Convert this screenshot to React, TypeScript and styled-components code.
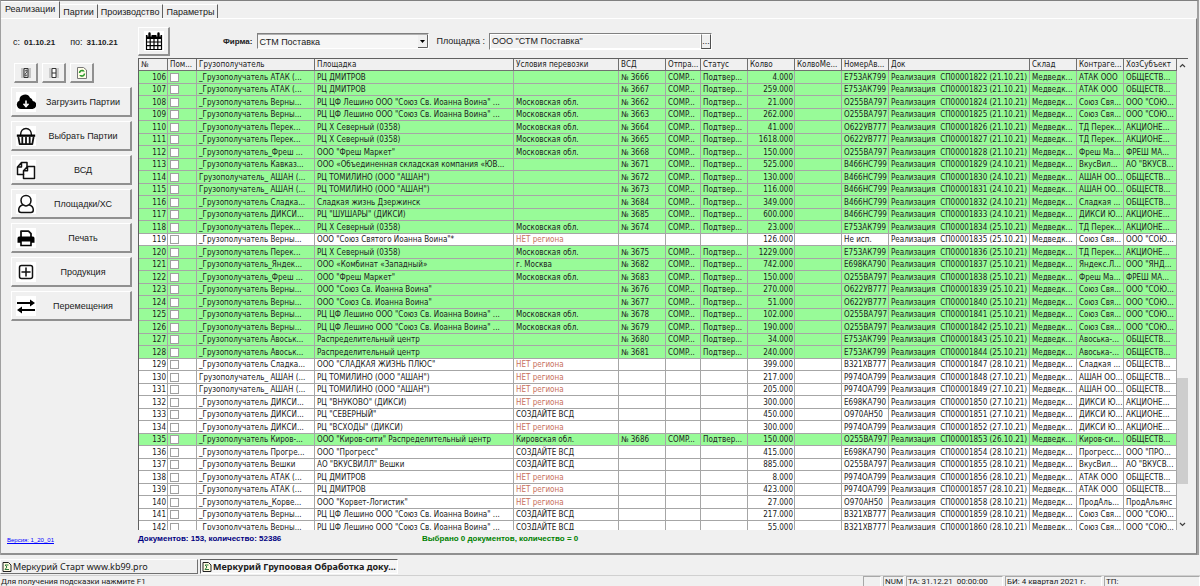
import React from 'react';
import styled, { createGlobalStyle } from 'styled-components';

const GlobalStyle = createGlobalStyle`
  * { box-sizing: border-box; }
  html, body { margin: 0; padding: 0; background: #f0f0f0; }
  body, button, input, select { font-family: "Liberation Sans", Arial, sans-serif; font-size: 9px; color: #202020; }
`;

const Window = styled.div`
  display: flex;
  flex-direction: column;
  height: 100vh;
  overflow: hidden;
  background: #f0f0f0;
`;

const Workspace = styled.div`
  flex: 1;
  min-height: 0;
  display: flex;
  flex-direction: column;
  margin-right: 1px;
  border-top: 1px solid #808080;
  border-left: 1px solid #a0a0a0;
  border-right: 2px solid #a0a0a0;
`;

const TabBar = styled.nav`
  display: flex;
  align-items: flex-end;
  height: 17px;
`;

const Tab = styled.button<{ $active?: boolean }>`
  height: ${p => (p.$active ? 17 : 14)}px;
  padding: ${p => (p.$active ? '0 4px 2px' : '0 3px')};
  border: 0;
  border-top: 1px solid #fff;
  border-right: 1px solid #606060;
  background: #f0f0f0;
  line-height: 12px;
  white-space: nowrap;
`;

const Page = styled.main`
  flex: 1;
  min-height: 0;
  display: flex;
  border-top: 1px solid #fff;
  border-right: 1px solid #808080;
  border-bottom: 2px solid #909090;
`;

const Sidebar = styled.aside`
  flex: 0 0 137px;
  display: flex;
  flex-direction: column;
  padding: 15px 6px 9px 10px;
`;

const Period = styled.div`
  display: flex;
  gap: 15px;
  height: 16px;
  padding-left: 2px;
  align-items: center;

  b { font-size: 8px; }
`;

const PeriodItem = styled.span`
  display: flex;
  align-items: center;
  gap: 4px;
  white-space: nowrap;
`;

const SmallButtons = styled.div`
  display: flex;
  gap: 4px;
  margin: 13px 0 4px;
  padding-left: 3px;
`;

const Raised = styled.button`
  border: 1px solid;
  border-color: #fff #909090 #909090 #fff;
  background: #f0f0f0;
  padding: 0;
`;

const SmallButton = styled(Raised)`
  width: 24px;
  height: 20px;
  display: grid;
  place-items: center;
  border-right-width: 2px;
  border-bottom-width: 2px;
`;

const Actions = styled.div`
  display: flex;
  flex-direction: column;
  gap: 4px;
`;

const ActionButton = styled(Raised)`
  height: 30px;
  display: flex;
  align-items: center;
  padding: 0 0 0 4px;
  border-right-width: 2px;
  border-bottom-width: 2px;

  svg { flex: none; background: #fff; }
  span { flex: 1; text-align: center; }
`;

const Version = styled.a`
  margin-top: auto;
  margin-left: -4px;
  font-size: 6px;
  line-height: 8px;
  color: #0000ff;
`;

const Content = styled.section`
  flex: 1;
  min-width: 0;
  display: flex;
  flex-direction: column;
  padding-right: 8px;
`;

const FilterBar = styled.div`
  display: flex;
  align-items: center;
  height: 39px;
  padding-top: 5px;
`;

const CalendarButton = styled(Raised)`
  width: 32px;
  height: 29px;
  margin: 0 53px 0 0;
  display: grid;
  place-items: center;
  border-right-width: 2px;
  border-bottom-width: 2px;
  svg { background: #fff; }
`;

const FieldLabel = styled.label<{ $bold?: boolean }>`
  font-size: ${p => (p.$bold ? 8 : 9)}px;
  font-weight: ${p => (p.$bold ? 700 : 400)};
  white-space: nowrap;
`;

const SelectBox = styled.span`
  display: flex;
  position: relative;
  width: 172px;
  height: 16px;
  margin: 0 7px 0 5px;
  border: 1px solid;
  border-color: #808080 #fff #fff #808080;

  svg {
    position: absolute;
    right: 0;
    top: 1px;
    pointer-events: none;
  }
`;

const Select = styled.select`
  appearance: none;
  flex: 1;
  padding: 0 12px 0 1px;
  border: 0;
  border-top: 1px solid #b0b0b0;
  background: #f6f6f6;
`;

const PickerBox = styled.span`
  display: flex;
  width: 223px;
  height: 17px;
  margin-left: 4px;
  border: 1px solid;
  border-color: #808080 #fff #fff #808080;
`;

const PickerInput = styled.input`
  flex: 1;
  min-width: 0;
  padding: 0 1px;
  border: 1px solid #fff;
  background: #f0f0f0;
`;

const PickerButton = styled(Raised)`
  width: 10px;
  line-height: 10px;
  border-color: #fff #505050 #505050 #808080;
`;

const GridFrame = styled.div`
  flex: 1;
  min-height: 0;
  display: flex;
  border-top: 1px solid #606060;
  border-left: 1px solid #606060;
  background: #f0f0f0;
`;

const GridViewport = styled.div`
  flex: 1;
  min-width: 0;
  overflow: hidden;
`;

const Table = styled.table`
  width: 100%;
  table-layout: fixed;
  border-collapse: separate;
  border-spacing: 0;
  font-family: "DejaVu Sans Condensed", "DejaVu Sans", sans-serif;
  font-size: 8px;
`;

const HeadCell = styled.th`
  height: 12px;
  padding: 0 0 0 2px;
  border-right: 1px solid #707070;
  border-bottom: 1px solid #707070;
  background: #f0f0f0;
  font-weight: 400;
  line-height: 11px;
  text-align: left;
  white-space: nowrap;
  overflow: hidden;
`;

const Row = styled.tr<{ $confirmed: boolean }>`
  height: 12px;
  background: ${p => (p.$confirmed ? '#98fb98' : '#fff')};
  &:nth-child(odd) { height: 13px; }
`;

const Cell = styled.td<{ $right?: boolean; $warn?: boolean }>`
  padding: 0 ${p => (p.$right ? 1 : 0)}px 0 2px;
  border-right: 1px solid #a6a6a6;
  border-bottom: 1px solid #a6a6a6;
  color: ${p => (p.$warn ? '#c8705c' : '#202020')};
  line-height: 11px;
  text-align: ${p => (p.$right ? 'right' : 'left')};
  white-space: pre;
  overflow: hidden;
`;

const Check = styled.input`
  appearance: none;
  display: block;
  width: 9px;
  height: 9px;
  margin: 0;
  border: 1px solid #a0a0a0;
  background: #fff;
`;

const ScrollBar = styled.div`
  flex: 0 0 11px;
  display: flex;
  flex-direction: column;
  align-items: center;
  background: #f0f0f0;
`;

const ScrollArrow = styled.button`
  width: 11px;
  height: 12px;
  padding: 0;
  border: 0;
  background: #f0f0f0;
  display: grid;
  place-items: center;
`;

const ScrollTrack = styled.div`
  flex: 1;
  align-self: stretch;
  display: flex;
  flex-direction: column;
`;

const ScrollSpace = styled.div<{ $share: number }>`
  flex: ${p => p.$share} 0 0;
`;

const ScrollThumb = styled.div`
  flex: 106 0 0;
  background: #cdcdcd;
`;

const Summary = styled.footer`
  display: flex;
  height: 23px;
  padding-top: 3px;
  font-size: 8px;
  font-weight: 700;
  line-height: 12px;
`;

const Total = styled.span`
  flex: 0 0 284px;
  color: #000080;
`;

const Selected = styled.span`
  color: #008000;
`;

const WindowTabs = styled.nav`
  display: flex;
  gap: 2px;
  height: 20px;
  padding: 4px 0 1px;
`;

const WindowTab = styled(Raised)<{ $active?: boolean }>`
  width: 198px;
  display: flex;
  align-items: center;
  gap: 1px;
  padding-left: 1px;
  overflow: hidden;
  border-color: ${p => (p.$active ? '#606060 #fff #fff #606060' : '#fff #707070 #707070 #fff')};
  background: ${p => (p.$active ? '#f6f6f6' : '#f0f0f0')};
  font-family: "Noto Sans", "Open Sans", sans-serif;
  font-weight: ${p => (p.$active ? 700 : 400)};
  line-height: 12px;
  white-space: nowrap;
`;

const StatusBar = styled.footer`
  display: flex;
  gap: 2px;
  height: 11px;
  border-top: 1px solid #d0d0d0;
  font-family: Roboto, "Liberation Sans", sans-serif;
  font-size: 8px;
  line-height: 11px;
  white-space: pre;
`;

const Hint = styled.span`
  flex: 1;
  padding-left: 1px;
`;

const StatusPane = styled.span<{ $width: number }>`
  flex: 0 0 ${p => p.$width}px;
  padding-left: 1px;
  border-top: 1px solid #a8a8a8;
  border-left: 1px solid #a8a8a8;
  border-right: 1px solid #fff;
  line-height: 10px;
`;

const columns: [string, number | null][] = [
  ['№', 29], ['Пом...', 29], ['Грузополучатель', 118], ['Площадка', null],
  ['Условия перевозки', 105], ['ВСД', 47], ['Отпра...', 35], ['Статус', 47],
  ['Колво', 47], ['КолвоМе...', 47], ['НомерАв...', 47], ['Док', 141],
  ['Склад', 47], ['Контраге...', 47], ['ХозСубъект', 53],
];

type Doc = [string, string, string, string, string, string, string, string, string];

const G = '_Грузополучатель';
const MO = 'Московская обл.';
const NO = 'НЕТ региона';
const MAKE = 'СОЗДАЙТЕ ВСД';
const LESH = 'РЦ ЦФ Лешино ООО "Союз Св. Иоанна Воина" ...';
const SOYUZ = 'ООО "Союз Св. Иоанна Воина"';
const NORTH = 'РЦ Х Северный (0358)';
const TOM = 'РЦ ТОМИЛИНО (ООО "АШАН")';
const ASH = 'Грузополучатель_ АШАН (...';
const OB = 'ОБЩЕСТВ...';
const AK = 'АКЦИОНЕ...';
const SO = 'ООО "СОЮ...';

// consignee, site, conditions, certificate, quantity, vehicle, document, contractor, legal entity
const docs: Doc[] = [
  [G + ' АТАК (...', 'РЦ ДМИТРОВ', '', '3666', '4.000', 'Е753АК799', '1822 (21.10.21)', 'АТАК ООО', OB],
  [G + ' АТАК (...', 'РЦ ДМИТРОВ', '', '3667', '259.000', 'Е753АК799', '1823 (21.10.21)', 'АТАК ООО', OB],
  [G + ' Верны...', LESH, MO, '3662', '21.000', 'О255ВА797', '1824 (21.10.21)', 'Союз Свя...', SO],
  [G + ' Верны...', LESH, MO, '3663', '262.000', 'О255ВА797', '1825 (21.10.21)', 'Союз Свя...', SO],
  [G + ' Перек...', NORTH, MO, '3664', '41.000', 'О622УВ777', '1826 (21.10.21)', 'ТД Перек...', AK],
  [G + ' Перек...', NORTH, MO, '3665', '1618.000', 'О622УВ777', '1827 (21.10.21)', 'ТД Перек...', AK],
  [G + '_Фреш ...', 'ООО "Фреш Маркет"', MO, '3668', '150.000', 'О255ВА797', '1828 (21.10.21)', 'Фреш Ма...', 'ФРЕШ МА...'],
  [G + ' Кавказ...', 'ООО «Объединенная складская компания «ЮВ...', '', '3671', '525.000', 'В466НС799', '1829 (24.10.21)', 'ВкусВил...', 'АО "ВКУСВ...'],
  [ASH, TOM, '', '3672', '130.000', 'В466НС799', '1830 (24.10.21)', 'АШАН ОО...', OB],
  [ASH, TOM, '', '3673', '116.000', 'В466НС799', '1831 (24.10.21)', 'АШАН ОО...', OB],
  [G + ' Сладка...', 'Сладкая жизнь Дзержинск', '', '3684', '349.000', 'В466НС799', '1832 (24.10.21)', 'Сладкая ...', OB],
  [G + ' ДИКСИ...', 'РЦ "ШУШАРЫ" (ДИКСИ)', '', '3685', '600.000', 'В466НС799', '1833 (24.10.21)', 'ДИКСИ Ю...', AK],
  [G + ' Перек...', NORTH, MO, '3674', '23.000', 'Е753АК799', '1834 (25.10.21)', 'ТД Перек...', AK],
  [G + ' Верны...', 'ООО "Союз Святого Иоанна Воина"*', NO, '', '126.000', 'Не исп.', '1835 (25.10.21)', 'Союз Свя...', SO],
  [G + ' Перек...', NORTH, MO, '3675', '1229.000', 'Е753АК799', '1836 (25.10.21)', 'ТД Перек...', AK],
  [G + '_Яндек...', 'ООО «Комбинат «Западный»', 'г. Москва', '3682', '742.000', 'Е698КА790', '1837 (25.10.21)', 'Яндекс.Л...', 'ООО "ЯНД...'],
  [G + '_Фреш ...', 'ООО "Фреш Маркет"', MO, '3683', '150.000', 'О255ВА797', '1838 (25.10.21)', 'Фреш Ма...', 'ФРЕШ МА...'],
  [G + ' Верны...', SOYUZ, '', '3676', '270.000', 'О622УВ777', '1839 (25.10.21)', 'Союз Свя...', SO],
  [G + ' Верны...', SOYUZ, '', '3677', '51.000', 'О622УВ777', '1840 (25.10.21)', 'Союз Свя...', SO],
  [G + ' Верны...', LESH, MO, '3678', '102.000', 'О255ВА797', '1841 (25.10.21)', 'Союз Свя...', SO],
  [G + ' Верны...', LESH, MO, '3679', '190.000', 'О255ВА797', '1842 (25.10.21)', 'Союз Свя...', SO],
  [G + ' Авоськ...', 'Распределительный центр', '', '3680', '34.000', 'Е753АК799', '1843 (25.10.21)', 'Авоська-...', OB],
  [G + ' Авоськ...', 'Распределительный центр', '', '3681', '240.000', 'Е753АК799', '1844 (25.10.21)', 'Авоська-...', OB],
  [G + ' Сладка...', 'ООО "СЛАДКАЯ ЖИЗНЬ ПЛЮС"', NO, '', '399.000', 'В321ХВ777', '1847 (28.10.21)', 'Сладкая ...', OB],
  [ASH, TOM, NO, '', '217.000', 'Р974ОА799', '1848 (27.10.21)', 'АШАН ОО...', OB],
  [ASH, TOM, NO, '', '205.000', 'Р974ОА799', '1849 (27.10.21)', 'АШАН ОО...', OB],
  [G + ' ДИКСИ...', 'РЦ "ВНУКОВО" (ДИКСИ)', NO, '', '300.000', 'Е698КА790', '1850 (27.10.21)', 'ДИКСИ Ю...', AK],
  [G + ' ДИКСИ...', 'РЦ "СЕВЕРНЫЙ"', MAKE, '', '450.000', 'О970АН50', '1851 (27.10.21)', 'ДИКСИ Ю...', AK],
  [G + ' ДИКСИ...', 'РЦ "ВСХОДЫ" (ДИКСИ)', NO, '', '300.000', 'Р974ОА799', '1852 (27.10.21)', 'ДИКСИ Ю...', AK],
  [G + ' Киров-...', 'ООО "Киров-сити" Распределительный центр', 'Кировская обл.', '3686', '150.000', 'О255ВА797', '1853 (26.10.21)', 'Киров-си...', OB],
  [G + ' Прогре...', 'ООО "Прогресс"', MAKE, '', '415.000', 'Е698КА790', '1854 (28.10.21)', 'Прогресс...', 'ООО "ПРО...'],
  [G + ' Вешки', 'АО "ВКУСВИЛЛ" Вешки', MAKE, '', '885.000', 'О255ВА797', '1855 (28.10.21)', 'ВкусВил...', 'АО "ВКУСВ...'],
  [G + ' АТАК (...', 'РЦ ДМИТРОВ', NO, '', '8.000', 'Р974ОА799', '1856 (28.10.21)', 'АТАК ООО', OB],
  [G + ' АТАК (...', 'РЦ ДМИТРОВ', NO, '', '423.000', 'Р974ОА799', '1857 (28.10.21)', 'АТАК ООО', OB],
  [G + '_Корве...', 'ООО "Корвет-Логистик"', NO, '', '27.000', 'О970АН50', '1858 (28.10.21)', 'ПродАль...', 'ПродАльянс'],
  [G + ' Верны...', LESH, MAKE, '', '217.000', 'В321ХВ777', '1859 (28.10.21)', 'Союз Свя...', SO],
  [G + ' Верны...', LESH, MAKE, '', '55.000', 'В321ХВ777', '1860 (28.10.21)', 'Союз Свя...', SO],
];

const stroke = { fill: 'none', stroke: '#111', strokeWidth: 1.5, strokeLinejoin: 'round' as const, strokeLinecap: 'round' as const };

const icons: Record<string, React.ReactNode> = {
  cloud: (
    <>
      <path d="M5 17a4.500 4.500 0 0 1-1.500-8.600A5.500 5.500 0 0 1 14 5.800a4 4 0 0 1 2.800 3.200A4 4 0 0 1 15.500 17z" fill="#000" />
      <path d="M10 8.500v4.500M7.500 11.700l2.500 2.800 2.500-2.800" stroke="#fff" strokeWidth="1.600" fill="none" />
    </>
  ),
  basket: (
    <>
      <path d="M4.500 9.500C4.500 5 7 2.500 10 2.500s5.500 2.500 5.500 7" {...stroke} />
      <path d="M.8 8.500h18.400v2.300H.8z" fill="#000" />
      <path d="M2.500 11.500l1.200 6.700h12.600l1.200-6.700M6.300 11.500v6M10 11.500v6M13.700 11.500v6" {...stroke} strokeWidth={1.800} />
    </>
  ),
  copies: (
    <>
      <path d="M7.500 14.500H1.500V7l4-4.500h5.500v4M5.500 2.500V7h-4" {...stroke} />
      <path d="M7.500 18.500v-7.700l4-4.300h7v12zM11.500 6.500v4.300h-4" {...stroke} />
    </>
  ),
  person: (
    <path d="M10 1.500c-3 0-5 2.200-5 5 0 1.700.7 3.200 1.900 4.200C4 11.600 2.700 13.500 2.700 16c0 1.600.9 2.500 2.400 2.500h9.800c1.500 0 2.400-.9 2.400-2.500 0-2.500-1.300-4.400-4.200-5.300A5.300 5.300 0 0 0 15 6.500c0-2.800-2-5-5-5zM6.900 10.700c1.800 1.400 4.400 1.400 6.200 0" {...stroke} />
  ),
  printer: (
    <>
      <path d="M5 9V3.200h7.500L15 5.700V9" {...stroke} strokeWidth={1.800} />
      <path d="M4 8.500h12a2 2 0 0 1 2.500 2v4.300h-17v-4.300a2 2 0 0 1 2.500-2z" fill="#000" />
      <path d="M5 12.800h10v4.700H5z" fill="#fff" stroke="#000" strokeWidth="1.600" />
    </>
  ),
  plus: (
    <>
      <rect x="3.500" y="3.500" width="13" height="13" rx="2" {...stroke} />
      <path d="M10 6v8M6 10h8" {...stroke} />
    </>
  ),
  swap: (
    <>
      <path d="M1 7h14M5 14h14" stroke="#000" strokeWidth="2" fill="none" />
      <path d="M14 3.500L19 7l-5 3.500zM6 10.500L1 14l5 3.500z" fill="#000" />
    </>
  ),
};

const Icon = ({ name }: { name: string }) => (
  <svg width="20" height="20" viewBox="0 0 20 20" aria-hidden="true">{icons[name]}</svg>
);

const actions: [string, string][] = [
  ['cloud', 'Загрузить Партии'], ['basket', 'Выбрать Партии'], ['copies', 'ВСД'],
  ['person', 'Площадки/ХС'], ['printer', 'Печать'], ['plus', 'Продукция'], ['swap', 'Перемещения'],
];

const SheetIcon = () => (
  <svg width="10" height="12" viewBox="0 0 10 12" aria-hidden="true">
    <path d="M1 1.500h5.500L9 4v6.500H1z" fill="#fffbe0" stroke="#222" />
    <path d="M3 4h3.500M3 4l2 2-2 2.500h4" fill="none" stroke="#2b7a3a" />
  </svg>
);

export default function App() {
  return (
    <Window>
      <GlobalStyle />
      <Workspace>
        <TabBar>
          <Tab $active>Реализации</Tab>
          <Tab>Партии</Tab>
          <Tab>Производство</Tab>
          <Tab>Параметры</Tab>
        </TabBar>
        <Page>
          <Sidebar>
            <Period>
              <PeriodItem>с: <b>01.10.21</b></PeriodItem>
              <PeriodItem>по: <b>31.10.21</b></PeriodItem>
            </Period>
            <SmallButtons>
              <SmallButton aria-label="Отметить все">
                <svg width="10" height="12" viewBox="0 0 10 12">
                  <path d="M0 1h10v10H0z" fill="#c4c4c4" />
                  <path d="M3 1.500h4v9H3z" fill="#ddd" stroke="#333" />
                  <path d="M4 4l2-1v2L4 7v2l2-1" fill="none" stroke="#555" />
                </svg>
              </SmallButton>
              <SmallButton aria-label="Снять отметки">
                <svg width="10" height="12" viewBox="0 0 10 12">
                  <path d="M0 1h10v10H0z" fill="#ccc" />
                  <path d="M3 1.500h4v9H3zM3 6h4" fill="#fff" stroke="#333" />
                </svg>
              </SmallButton>
              <SmallButton aria-label="Обновить">
                <svg width="10" height="12" viewBox="0 0 10 12">
                  <path d="M.5.500h6L9.500 3v8.500h-9z" fill="#fffde8" stroke="#777" />
                  <path d="M2.500 6a2.500 2.500 0 0 1 4-2M7.500 6.500a2.500 2.500 0 0 1-4 2" fill="none" stroke="#2c9a2c" strokeWidth="1.500" />
                  <path d="M5.500 2.500L8 4.500H5.500zM4.500 10L2 8h2.500z" fill="#2c9a2c" />
                </svg>
              </SmallButton>
            </SmallButtons>
            <Actions>
              {actions.map(([icon, label]) => (
                <ActionButton key={label}>
                  <Icon name={icon} />
                  <span>{label}</span>
                </ActionButton>
              ))}
            </Actions>
            <Version href="#version">Версия: 1_20_01</Version>
          </Sidebar>
          <Content>
            <FilterBar>
              <CalendarButton aria-label="Период">
                <svg width="20" height="20" viewBox="0 0 20 20">
                  <path d="M2.500 4.500h15v14h-15zM2.500 7.500h15M2.500 11h15M2.500 14.700h15M6.200 7.500v11M10 7.500v11M13.800 7.500v11" fill="none" stroke="#000" strokeWidth="1.200" />
                  <path d="M2.500 4.500h15v3h-15z" fill="#000" />
                  <path d="M5.500 2v3.500M14.500 2v3.500" stroke="#fff" strokeWidth="4" />
                  <path d="M5.500 2.500v3M14.500 2.500v3" stroke="#000" strokeWidth="2.400" strokeLinecap="round" />
                </svg>
              </CalendarButton>
              <FieldLabel $bold htmlFor="firm">Фирма:</FieldLabel>
              <SelectBox>
                <Select id="firm" defaultValue="stm">
                  <option value="stm">СТМ Поставка</option>
                </Select>
                <svg width="10" height="13" viewBox="0 0 10 13" aria-hidden="true">
                  <path d="M0 0h10v13H0z" fill="#f0f0f0" />
                  <path d="M9.500 0v12.500H0" fill="none" stroke="#606060" />
                  <path d="M2 5h5L4.500 8z" fill="#000" />
                </svg>
              </SelectBox>
              <FieldLabel htmlFor="site">Площадка :</FieldLabel>
              <PickerBox>
                <PickerInput id="site" defaultValue={'ООО "СТМ Поставка"'} />
                <PickerButton aria-label="Выбрать площадку">...</PickerButton>
              </PickerBox>
            </FilterBar>
            <GridFrame>
              <GridViewport>
                <Table>
                  <colgroup>
                    {columns.map(([title, width]) => <col key={title} width={width ?? undefined} />)}
                  </colgroup>
                  <thead>
                    <tr>{columns.map(([title]) => <HeadCell key={title}>{title}</HeadCell>)}</tr>
                  </thead>
                  <tbody>
                    {docs.map(([consignee, site, terms, cert, qty, car, doc, agent, entity], i) => (
                      <Row key={doc} $confirmed={cert !== ''}>
                        <Cell $right>{106 + i}</Cell>
                        <Cell><Check type="checkbox" aria-label={`Документ ${106 + i}`} /></Cell>
                        <Cell>{consignee}</Cell>
                        <Cell>{site}</Cell>
                        <Cell $warn={terms === NO}>{terms}</Cell>
                        <Cell>{cert && `№ ${cert}`}</Cell>
                        <Cell>{cert && 'COMP...'}</Cell>
                        <Cell>{cert && 'Подтвер...'}</Cell>
                        <Cell $right>{qty}</Cell>
                        <Cell />
                        <Cell>{car}</Cell>
                        <Cell>{`Реализация  СП0000${doc}`}</Cell>
                        <Cell>Медведк...</Cell>
                        <Cell>{agent}</Cell>
                        <Cell>{entity}</Cell>
                      </Row>
                    ))}
                  </tbody>
                </Table>
              </GridViewport>
              <ScrollBar>
                <ScrollArrow aria-label="Вверх">
                  <svg width="7" height="5" viewBox="0 0 7 5"><path d="M1 4l2.500-2.500L6 4" fill="none" stroke="#404040" strokeWidth="1.200" /></svg>
                </ScrollArrow>
                <ScrollTrack>
                  <ScrollSpace $share={307} />
                  <ScrollThumb />
                  <ScrollSpace $share={34} />
                </ScrollTrack>
                <ScrollArrow aria-label="Вниз">
                  <svg width="7" height="5" viewBox="0 0 7 5"><path d="M1 1l2.500 2.500L6 1" fill="none" stroke="#404040" strokeWidth="1.200" /></svg>
                </ScrollArrow>
              </ScrollBar>
            </GridFrame>
            <Summary>
              <Total>Документов: 153, количество: 52386</Total>
              <Selected>Выбрано 0 документов, количество = 0</Selected>
            </Summary>
          </Content>
        </Page>
      </Workspace>
      <WindowTabs>
        <WindowTab><SheetIcon />Меркурий Старт www.kb99.pro</WindowTab>
        <WindowTab $active><SheetIcon />Меркурий Групоовая Обработка доку...</WindowTab>
      </WindowTabs>
      <StatusBar>
        <Hint>Для получения подсказки нажмите F1</Hint>
        <StatusPane $width={18} />
        <StatusPane $width={21}>NUM</StatusPane>
        <StatusPane $width={97}>ТА: 31.12.21  00:00:00</StatusPane>
        <StatusPane $width={97}>БИ: 4 квартал 2021 г.</StatusPane>
        <StatusPane $width={96}>ТП:</StatusPane>
      </StatusBar>
    </Window>
  );
}
